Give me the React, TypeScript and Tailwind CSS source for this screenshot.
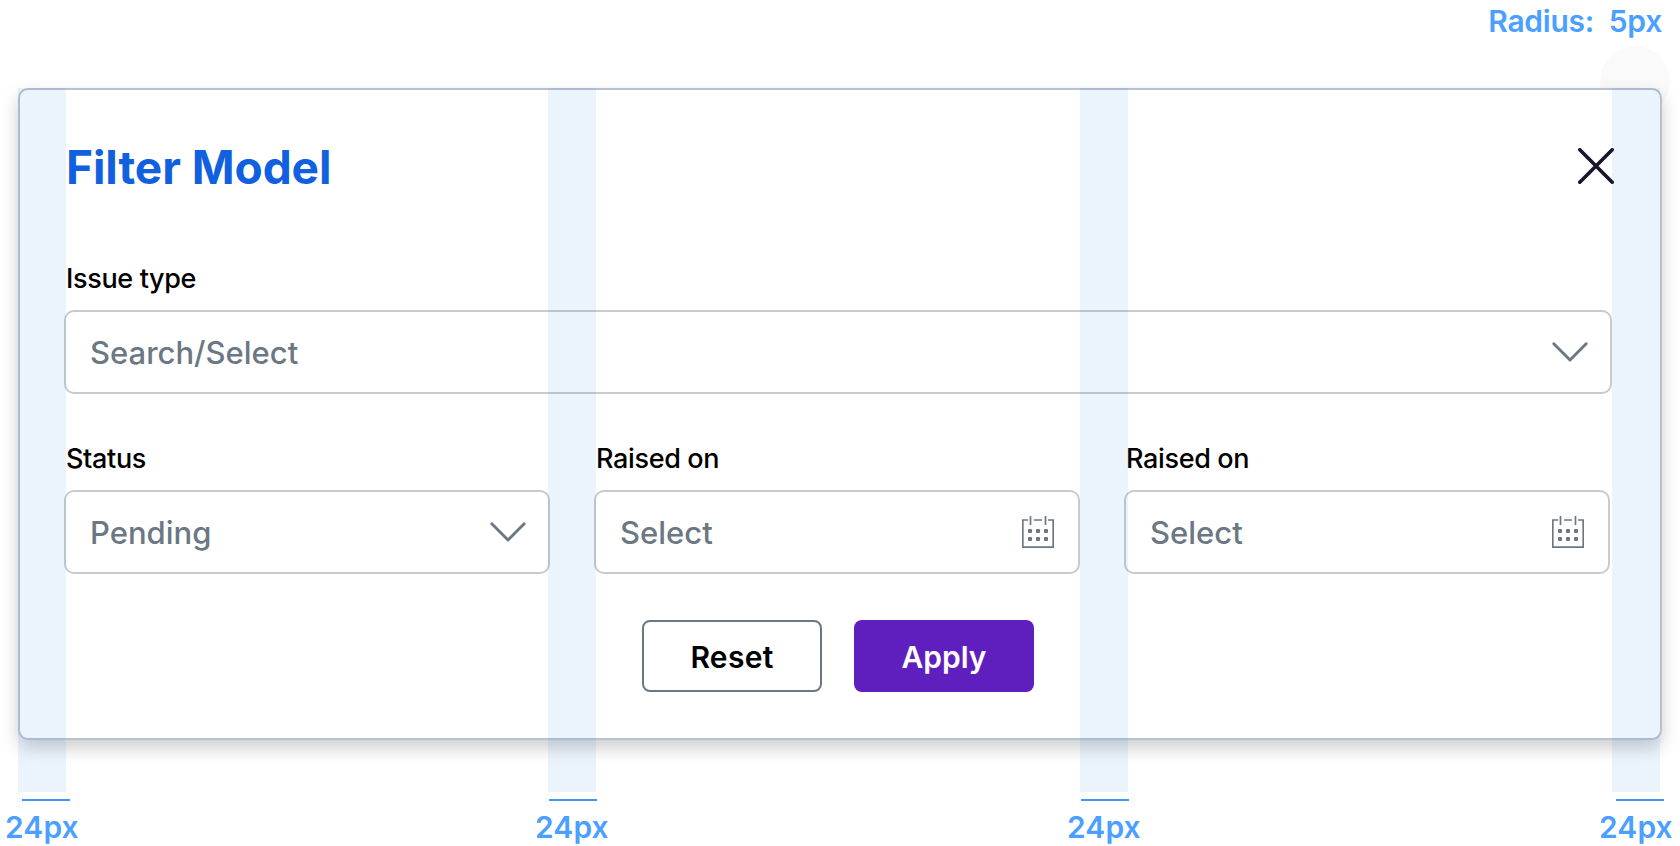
import type { ReactNode } from "react";

function Chevron() {
  return (
    <svg className="h-5 w-9" viewBox="0 0 36 20" fill="none" stroke="#6b7883" strokeWidth="2.9" strokeLinecap="round" strokeLinejoin="round">
      <path d="M1.8 1.8 18 18 34.2 1.8" />
    </svg>
  );
}

function Calendar() {
  return (
    <svg className="h-8 w-8" viewBox="0 0 32 32" fill="none" stroke="#6b7883" strokeWidth="1.7">
      <path d="M6.2 4H.8V31.2H31.2V4H26M12 4h8" />
      <path d="M8.5 0v9M23.5 0v9" />
      <g fill="#6b7883" stroke="none">
        {[8, 16, 24].map((x) =>
          [15, 23].map((y) => <rect key={`${x}-${y}`} x={x - 2} y={y - 2} width="4" height="4" rx="1" />),
        )}
      </g>
    </svg>
  );
}

function Field({ label, value, icon, padding }: { label: string; value: string; icon: ReactNode; padding: string }) {
  return (
    <div className="flex flex-col">
      <label className="h-[50px] pl-[2px] pt-px text-[27px] font-[450] leading-9 tracking-[-0.35px] text-black">{label}</label>
      <button className={`flex h-[84px] w-full items-center justify-between rounded-[10px] border-2 border-[#cacaca] pl-6 text-[31px] leading-10 text-[#6b7883] ${padding}`}>
        <span className="pt-[2px] font-[450]">{value}</span>
        {icon}
      </button>
    </div>
  );
}

const guides = [
  { column: "left-[18px]", offset: "left-1", text: "left-[-13px]" },
  { column: "left-[548px]", offset: "left-[1px]", text: "left-[-13px]" },
  { column: "left-[1080px]", offset: "left-[1px]", text: "left-[-13px]" },
  { column: "left-[1612px]", offset: "left-1", text: "left-[-13px]" },
];

export default function App() {
  return (
    <main className="relative isolate h-[846px] w-[1680px] overflow-hidden bg-white px-[18px] font-['Inter',sans-serif]">
      <div className="absolute left-[1600px] top-[46px] -z-10 h-[70px] w-[70px] rounded-full bg-[#fafafa]" />
      <p className="flex h-[88px] justify-end pt-px text-[30px] font-semibold leading-10 tracking-[-0.25px] whitespace-pre text-[#4ba0ff]">Radius:  5px</p>

      <section className="flex h-[652px] w-[1644px] flex-col rounded-[10px] border-2 border-[#b7c2cf] bg-white pr-12 pl-11 shadow-[0_8px_18px_rgba(0,0,0,0.2)]">
        <header className="flex h-[170px] items-start justify-between pt-[50px]">
          <h1 className="mt-[-1px] pl-[2px] text-[46px] font-bold leading-[56px] tracking-[-0.05px] text-[#1060e0]">Filter Model</h1>
          <button aria-label="Close" className="mt-[8px] mr-[-2px]">
            <svg className="h-9 w-9" viewBox="0 0 36 36" fill="none" stroke="#17152b" strokeWidth="3.6" strokeLinecap="round">
              <path d="M1.8 1.8 34.2 34.2M34.2 1.8 1.8 34.2" />
            </svg>
          </button>
        </header>
        <Field label="Issue type" value="Search/Select" icon={<Chevron />} padding="pr-[22px]" />
        <div className="mt-[46px] grid w-[1546px] grid-cols-3 gap-11">
          <Field label="Status" value="Pending" icon={<Chevron />} padding="pr-[22px]" />
          <Field label="Raised on" value="Select" icon={<Calendar />} padding="pr-6" />
          <Field label="Raised on" value="Select" icon={<Calendar />} padding="pr-6" />
        </div>
        <footer className="mt-[46px] flex w-[1548px] justify-center gap-8">
          <button className="h-[72px] w-[180px] rounded-lg border-2 border-[#6b7883] pt-[2px] text-[30px] font-semibold tracking-[0.3px] text-black">Reset</button>
          <button className="h-[72px] w-[180px] rounded-lg bg-[#5f1ebe] pt-[2px] text-[30px] font-semibold text-white">Apply</button>
        </footer>
      </section>

      {guides.map((g) => (
        <div key={g.column} className={`absolute top-[88px] h-[704px] w-12 bg-[rgba(55,135,235,0.1)] ${g.column}`}>
          <div className={`absolute top-[711px] h-[2px] w-12 bg-[#4095f8] ${g.offset}`} />
          <span className={`absolute top-[719px] text-[30px] font-semibold leading-10 whitespace-nowrap tracking-[0.1px] text-[#4ba0ff] ${g.text}`}>24px</span>
        </div>
      ))}
    </main>
  );
}
